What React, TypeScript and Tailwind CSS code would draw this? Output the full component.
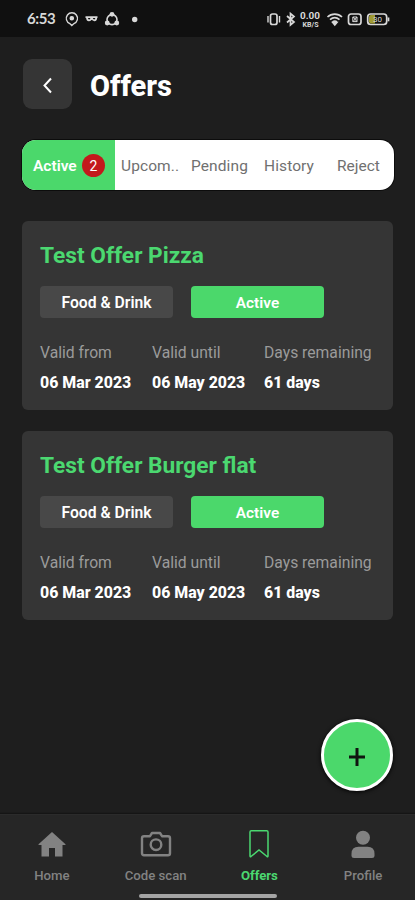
import React from "react";

type Offer = { title: string; category: string; from: string; until: string; remaining: string };

const offers: Offer[] = [
  { title: "Test Offer Pizza", category: "Food & Drink", from: "06 Mar 2023", until: "06 May 2023", remaining: "61 days" },
  { title: "Test Offer Burger flat", category: "Food & Drink", from: "06 Mar 2023", until: "06 May 2023", remaining: "61 days" },
];

function StatusBar() {
  return (
    <div className="flex h-[37px] shrink-0 items-center bg-[#101010] pl-[27px] text-[#d8d8d8]">
      <span className="w-[38px] font-['Lato'] text-[15px] font-bold leading-none tracking-[-0.4px]">6:53</span>
      <svg className="h-4 w-[78px]" viewBox="0 0 78 16" fill="none" stroke="currentColor" strokeWidth="1.4">
        <path d="M4.8 12.6A5.6 5.6 0 1 1 9 12.6L6.8 14.6Z" />
        <circle cx="6.8" cy="7.2" r="1.6" fill="currentColor" />
        <path d="M20.5 6.2h12M22 6.3c0 4.2 3.6 3.6 4.3.8h.5c.8 2.8 4.5 3.4 4.5-.8" strokeWidth="1.8" />
        <circle cx="47" cy="8.6" r="5" strokeWidth="1.6" />
        <g fill="currentColor" stroke="none"><circle cx="47" cy="3.3" r="2.4" /><circle cx="42.2" cy="12" r="2.4" /><circle cx="51.8" cy="12" r="2.4" /><circle cx="69.7" cy="8.5" r="2.7" /></g>
      </svg>
      <svg className="ml-auto mr-[24px] h-[20px] w-[124px]" viewBox="0 -1 124 20" fill="none" stroke="currentColor" strokeWidth="1.7">
        <rect x="3.5" y="4" width="6.5" height="10.5" rx="2" />
        <path d="M1 6v6.5M12.5 6v6.5" strokeWidth="1.4" />
        <path d="m20 6 7 6-3.5 3V3.5L27 6.5l-7 6" />
        <g stroke="none" fill="currentColor" className="font-['Roboto'] font-bold">
          <text x="33" y="8.6" fontSize="9" textLength="20" lengthAdjust="spacingAndGlyphs">0.00</text>
          <text x="35.5" y="16.8" fontSize="6.5" textLength="16" lengthAdjust="spacingAndGlyphs">KB/S</text>
        </g>
        <path d="M60.5 7c4-3.8 10.5-3.8 14.5 0M63 9.6c3-2.5 6.5-2.5 9.5 0M65.5 12c1.8-1.3 2.8-1.3 4.5 0" />
        <path d="m65.8 12.5 2 2.5 2-2.5Z" fill="currentColor" />
        <rect x="81.5" y="4" width="12.5" height="10.5" rx="2.5" />
        <path d="M85.8 7h4.2v4.6h-4.2zM86 7l4 4.6M90 7l-4 4.6" strokeWidth="1" />
        <rect x="100.7" y="4" width="19" height="10.5" rx="3" />
        <path d="M121.5 7.5v3.8" strokeWidth="1.7" />
        <path d="M104 5h4v8.6h-4q-2 0-2-2V7q0-2 2-2Z" fill="#a09a32" stroke="none" />
        <text x="106" y="12.2" fontSize="8" stroke="none" fill="currentColor" className="font-['Roboto']">30</text>
      </svg>
    </div>
  );
}

function Detail({ label, value, className }: { label: string; value: string; className?: string }) {
  return (
    <div className={className}>
      <div className="text-[15.7px] leading-[20px] text-[#9b9b9b]">{label}</div>
      <div className="mt-[10px] text-[15.9px] font-extrabold leading-[20px] text-white">{value}</div>
    </div>
  );
}

function OfferCard({ offer }: { offer: Offer }) {
  return (
    <article className="h-[189px] rounded-[6px] bg-[#353535] pl-[18px] pt-[21px]">
      <h2 className="text-[22.7px] font-bold leading-[28px] text-[#4bd870]">{offer.title}</h2>
      <div className="mt-[16px] flex gap-[18px] font-semibold text-white">
        <div className="flex h-8 w-[133px] items-center justify-center rounded-[4px] bg-[#484848] pt-px text-[15.7px]">{offer.category}</div>
        <div className="flex h-8 w-[133px] items-center justify-center rounded-[4px] bg-[#4bd86b] pt-[3px] text-[15.4px]">Active</div>
      </div>
      <div className="mt-[25px] flex whitespace-nowrap">
        <Detail label="Valid from" value={offer.from} className="w-[112px]" />
        <Detail label="Valid until" value={offer.until} className="w-[112px]" />
        <Detail label="Days remaining" value={offer.remaining} />
      </div>
    </article>
  );
}

function NavItem({ label, active, children }: { label: string; active?: boolean; children: React.ReactNode }) {
  return (
    <div className={`flex w-1/4 flex-col items-center ${active ? "text-[#4bd870]" : "text-[#828282]"}`}>
      <svg className="h-8 w-8" viewBox="0 0 32 32" fill="none">{children}</svg>
      <span className={`mt-[7px] whitespace-nowrap text-[13.2px] leading-[18px] ${active ? "font-bold tracking-[-0.1px]" : "font-medium"}`}>{label}</span>
    </div>
  );
}

export default function App() {
  return (
    <div className="flex h-[900px] w-[415px] flex-col overflow-hidden bg-[#1e1e1e] font-['Roboto',sans-serif]">
      <StatusBar />
      <header className="ml-[23px] mt-[22px] flex items-center">
        <button className="flex h-[50px] w-[49px] items-center justify-center rounded-[9px] bg-[#353535]">
          <svg className="mt-px" width="16" height="20" viewBox="0 0 16 20" fill="none" stroke="#fff" strokeWidth="2"><path d="m11 3.5-6.5 7 6.5 7" /></svg>
        </button>
        <h1 className="ml-[18px] h-[50px] pt-[2px] text-[29px] font-extrabold leading-[50px] text-white">Offers</h1>
      </header>
      <div className="ml-[22px] mt-[31px] flex h-[50px] w-[372px] shrink-0 items-center overflow-hidden rounded-[14px] bg-white text-[15.5px] text-[#707070] ring-1 ring-[#0c0c0c]">
        <div className="flex h-full w-[93px] items-center bg-[#4bd86b] pl-[11px] text-white">
          <span className="w-[49px] pt-[3px] font-semibold">Active</span>
          <span className="flex h-[23px] w-[23px] items-center justify-center rounded-full bg-[#c3191c] pt-[2px] text-[14px]">2</span>
        </div>
        <span className="w-[70px] pl-[6px] pt-[3px] tracking-[0.1px]">Upcom..</span>
        <span className="w-[70px] pl-[6px] pt-[3px] tracking-[0.1px]">Pending</span>
        <span className="w-[70px] pl-[9px] pt-[3px] tracking-[0.1px]">History</span>
        <span className="pl-[12px] pt-[3px]">Reject</span>
      </div>
      <main className="ml-[22px] mt-[31px] flex w-[371px] flex-col gap-[21px]">
        {offers.map((offer) => <OfferCard key={offer.title} offer={offer} />)}
      </main>
      <button className="ml-[321px] mt-[99px] flex h-[72px] w-[72px] shrink-0 items-center justify-center rounded-full border-[3px] border-white bg-[#4bd86b] shadow-[0_1px_4px_#000]">
        <svg className="mt-[4px]" width="18" height="18" viewBox="0 0 18 18" stroke="#101510" strokeWidth="3"><path d="M9 0v18M1 9h16" /></svg>
      </button>
      <nav className="mt-auto h-[86px] shrink-0 border-t border-[#2b2b2b] bg-[#262626] shadow-[0_-1px_1px_#151515]">
        <div className="flex pt-[13px]">
          <NavItem label="Home"><path d="M16 4 2.5 16.2q-.5.8.5.8h2.5v11.5H13V20h6v8.5h7.5V17H29q1 0 .5-.8Z" fill="currentColor" /></NavItem>
          <NavItem label="Code scan">
            <path d="M4 8.2h6l2-3.2h8l2 3.2h6q2 0 2 2v15q0 2-2 2H4q-2 0-2-2v-15q0-2 2-2Z" stroke="currentColor" strokeWidth="2.4" strokeLinejoin="round" />
            <circle cx="16" cy="16.7" r="5.3" stroke="currentColor" strokeWidth="2.4" />
          </NavItem>
          <NavItem label="Offers" active><path d="M8.3 2.8h15.4q1.3 0 1.3 1.3v24q0 1-1 .4L16 22l-8 6.5q-1 .6-1-.4v-24q0-1.3 1.3-1.3Z" stroke="currentColor" strokeWidth="1.5" /></NavItem>
          <NavItem label="Profile"><circle cx="16" cy="9.7" r="7" fill="currentColor" /><path d="M4.5 28v-2.2q0-7 7-7h9q7 0 7 7V28q0 2-2.5 2H7q-2.5 0-2.5-2Z" fill="currentColor" /></NavItem>
        </div>
        <div className="mx-auto mt-[9px] h-1 w-[138px] rounded-full bg-[#a5a5a5]" />
      </nav>
    </div>
  );
}
